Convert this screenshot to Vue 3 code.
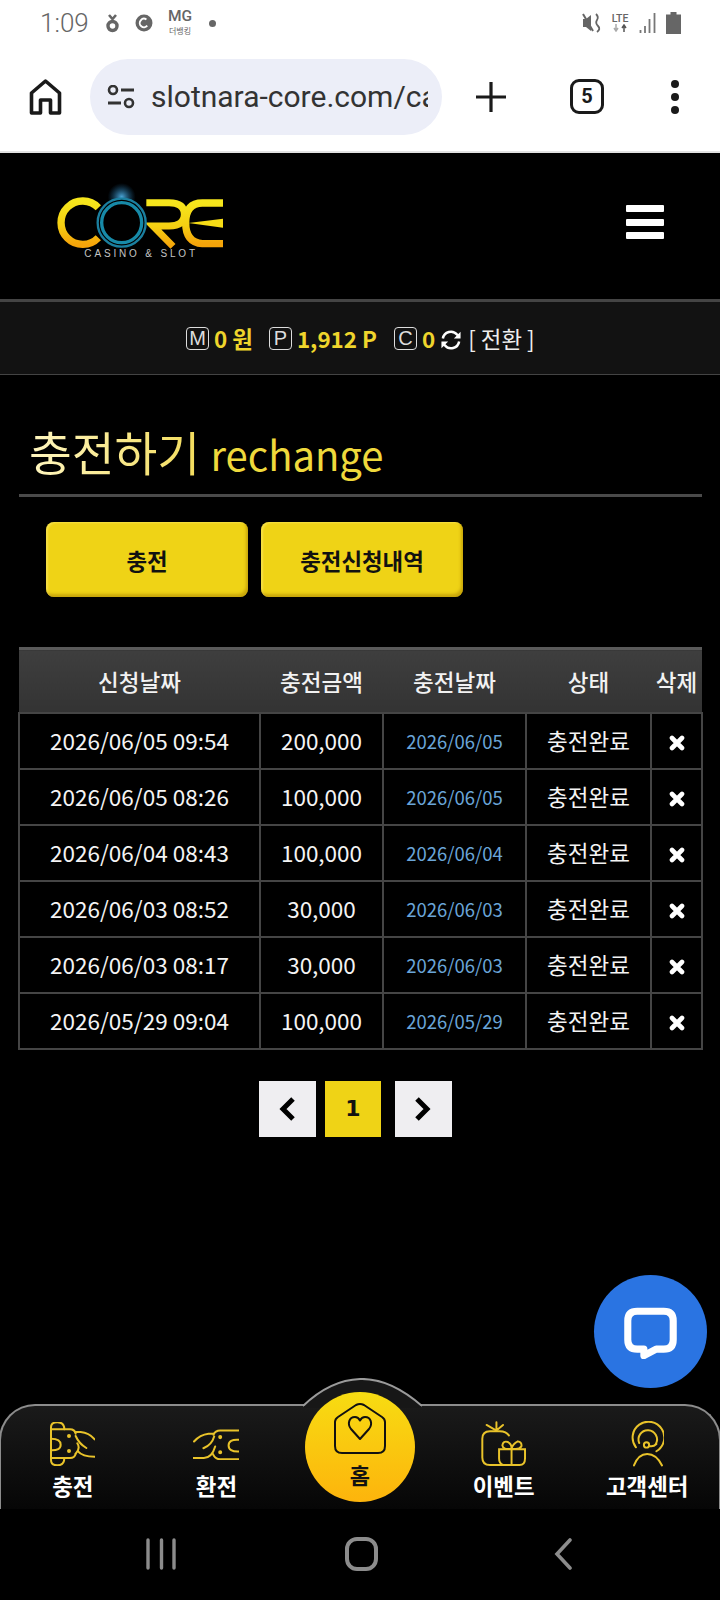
<script setup>
const rows = [
  { at: '2026/06/05 09:54', amount: '200,000', day: '2026/06/05' },
  { at: '2026/06/05 08:26', amount: '100,000', day: '2026/06/05' },
  { at: '2026/06/04 08:43', amount: '100,000', day: '2026/06/04' },
  { at: '2026/06/03 08:52', amount: '30,000', day: '2026/06/03' },
  { at: '2026/06/03 08:17', amount: '30,000', day: '2026/06/03' },
  { at: '2026/05/29 09:04', amount: '100,000', day: '2026/05/29' },
]
</script>

<template>
  <div class="screen">
    <div class="status">
      <span class="time">1:09</span>
      <svg class="s1" width="13" height="19" viewBox="0 0 13 19"><circle cx="6.500" cy="12" r="4.500" fill="none" stroke="#666" stroke-width="3.400"/><path d="M3 1l3.500 4L10 1" fill="none" stroke="#666" stroke-width="2.600"/></svg>
      <svg class="s2" width="18" height="18" viewBox="0 0 17 17"><circle cx="8.500" cy="8.500" r="8" fill="#666"/><circle cx="8.500" cy="8.500" r="4" fill="none" stroke="#fff" stroke-width="1.800" stroke-dasharray="18 7" transform="rotate(40 8.500 8.500)"/></svg>
      <div class="mg"><span class="mg-a">MG</span><span class="mg-b">더뱅킹</span></div>
      <i class="sdot"></i>
      <div class="sright">
        <svg width="19" height="24" viewBox="0 0 19 24"><path d="M1 8h3l5-4v16l-5-4H1z" fill="#666"/><path d="M1 3l10 17" stroke="#666" stroke-width="2"/><path d="M14 3q3 3 1 6t1 6-1 6" fill="none" stroke="#666" stroke-width="1.800"/></svg>
        <div class="lte"><span>LTE</span><svg width="18" height="8" viewBox="0 0 18 8"><path d="M5 0v6M3 4l2 3 2-3" fill="none" stroke="#aaa" stroke-width="1.500"/><path d="M13 8V2M11 4l2-3 2 3" fill="none" stroke="#555" stroke-width="1.500"/></svg></div>
        <svg width="18" height="22" viewBox="0 0 18 22"><path d="M1.500 21v-3M6 21v-7M10.500 21V7M15.500 21V1" stroke="#777" stroke-width="1.800"/></svg>
        <svg width="15" height="22" viewBox="0 0 15 22"><path d="M4.500 0h6v2.500H15V22H0V2.500h4.500z" fill="#666"/></svg>
      </div>
    </div>

    <div class="browser">
      <svg class="b-home" width="33" height="36" viewBox="0 0 33 36"><path d="M2.500 34V14L16.500 2l14 12v20h-9V21h-10v13z" fill="none" stroke="#1a1a1a" stroke-width="3.600" stroke-linejoin="round"/></svg>
      <div class="pill">
        <svg width="28" height="24" viewBox="0 0 28 24"><circle cx="6" cy="5" r="4" fill="none" stroke="#333" stroke-width="2.600"/><path d="M14 5h13M1 18h13" stroke="#333" stroke-width="2.800"/><circle cx="22" cy="18" r="4" fill="none" stroke="#333" stroke-width="2.600"/></svg>
        <span class="url">slotnara-core.com/casino</span>
      </div>
      <svg class="b-plus" width="32" height="32" viewBox="0 0 32 32"><path d="M16 1v30M1 16h30" stroke="#1a1a1a" stroke-width="3.200"/></svg>
      <div class="tabs">5</div>
      <div class="kebab"><i></i><i></i><i></i></div>
    </div>

    <header class="top">
      <svg class="logo" width="220" height="100" viewBox="0 0 660 300">
        <defs>
          <linearGradient id="gold" x1="0" y1="0" x2="0" y2="1">
            <stop offset="0" stop-color="#f6e61c"/><stop offset="0.55" stop-color="#f5d012"/><stop offset="1" stop-color="#f5a40a"/>
          </linearGradient>
          <radialGradient id="glow"><stop offset="0" stop-color="#59c4ff" stop-opacity=".85"/><stop offset="1" stop-color="#1b6fa8" stop-opacity="0"/></radialGradient>
        </defs>
        <circle cx="278" cy="78" r="42" fill="url(#glow)"/>
        <path d="M208 110A65 65 0 1 0 208 200" fill="none" stroke="url(#gold)" stroke-width="22"/>
        <path d="M352 95H420Q466 95 466 130T420 165H372L432 226" fill="none" stroke="url(#gold)" stroke-width="21"/>
        <path d="M582 96H520Q470 96 470 155T520 218H582" fill="none" stroke="url(#gold)" stroke-width="22"/>
        <path d="M478 156L582 143V170z" fill="#f6dc16"/>
        <circle cx="278" cy="155" r="72" fill="#000" stroke="#1b7f9f" stroke-width="7"/>
        <circle cx="278" cy="155" r="60" fill="#000" stroke="#178aa8" stroke-width="10"/>
        <text x="166" y="257" class="logo-sub">CASINO &amp; SLOT</text>
      </svg>
      <div class="burger"><i></i><i></i><i></i></div>
    </header>

    <div class="balance">
      <span class="tag">M</span><b class="val v1">0 원</b>
      <span class="tag t2">P</span><b class="val v2">1,912 P</b>
      <span class="tag t3">C</span><b class="val v3">0</b>
      <svg class="refresh" width="22" height="22" viewBox="0 0 23 23"><path d="M3 10a8.500 8.500 0 0 1 15-4l2 2M20 13a8.500 8.500 0 0 1-15 4l-2-2" fill="none" stroke="#fff" stroke-width="2.600"/><path d="M21.500 3v7h-7zM1.500 20v-7h7z" fill="#fff"/></svg>
      <span class="swap">[ 전환 ]</span>
    </div>

    <main class="page">
      <h2 class="title"><span class="ko">충전하기</span> <span class="en">rechange</span></h2>
      <div class="tabs-row">
        <button class="gold-btn">충전</button>
        <button class="gold-btn">충전신청내역</button>
      </div>

      <table class="list">
        <colgroup><col class="c1"><col class="c2"><col class="c3"><col class="c4"><col class="c5"></colgroup>
        <thead>
          <tr><th>신청날짜</th><th>충전금액</th><th>충전날짜</th><th>상태</th><th>삭제</th></tr>
        </thead>
        <tbody>
          <tr v-for="r in rows" :key="r.at">
            <td>{{ r.at }}</td>
            <td>{{ r.amount }}</td>
            <td class="blue">{{ r.day }}</td>
            <td>충전완료</td>
            <td class="del"><svg width="16" height="16" viewBox="0 0 16 16"><path d="M3 3l10 10M13 3L3 13" stroke="#fff" stroke-width="4.600" stroke-linecap="round"/></svg></td>
          </tr>
        </tbody>
      </table>

      <div class="pager">
        <button class="pg"><svg width="18" height="26" viewBox="0 0 18 26"><path d="M14 3L4 13l10 10" fill="none" stroke="#000" stroke-width="5"/></svg></button>
        <button class="pg on">1</button>
        <button class="pg last"><svg class="next" width="18" height="26" viewBox="0 0 18 26"><path d="M4 3l10 10L4 23" fill="none" stroke="#000" stroke-width="5"/></svg></button>
      </div>
    </main>

    <div class="chat">
      <svg width="53" height="52" viewBox="0 0 56 54"><path d="M14 4h28q10 0 10 10v20q0 10-10 10H34L21 51v-7h-7Q4 44 4 34V14Q4 4 14 4z" fill="none" stroke="#fff" stroke-width="7.500" stroke-linejoin="round"/></svg>
    </div>

    <nav class="nav">
      <svg class="bump" width="121" height="30" viewBox="0 0 121 30"><path d="M1 28Q28 2 58 1t62 27" fill="#171717" stroke="#9a9a9a" stroke-width="2"/><path d="M2 28h117v2H2z" fill="#171717"/></svg>
      <div class="item">
        <div class="ico">
          <svg width="45" height="44" viewBox="28 20 135 132" fill="none" stroke="#e9c32a" stroke-width="6" stroke-linecap="round">
            <path d="M31 128V42V36Q31 21 50 21Q71 21 71 42M31 128V134Q31 150 50 150Q71 150 71 128"/>
            <path d="M31 42H88Q102 42 105 55M31 128H88Q102 128 105 115"/>
            <path d="M31 70Q60 70 60 88T31 105"/>
            <path d="M103 50H120Q145 52 162 72M105 62Q115 85 137 98M105 115Q120 100 110 84M112 108Q125 124 162 124"/>
            <circle cx="85" cy="62" r="3" fill="#e9c32a"/><circle cx="85" cy="107" r="3" fill="#e9c32a"/>
          </svg>
        </div>
        <span class="lbl">충전</span>
      </div>
      <div class="item">
        <div class="ico">
          <svg width="46" height="31" viewBox="459 38 137 92" fill="none" stroke="#e9c32a" stroke-width="6" stroke-linecap="round">
            <path d="M595 42H540Q525 42 520 55M595 128H540Q525 128 518 112"/>
            <path d="M595 70Q565 68 565 87T595 105"/>
            <path d="M520 52H505Q480 55 462 75M522 60Q515 85 490 95M525 90Q515 125 490 124H460"/>
            <circle cx="540" cy="62" r="3" fill="#e9c32a"/><circle cx="540" cy="107" r="3" fill="#e9c32a"/>
          </svg>
        </div>
        <span class="lbl">환전</span>
      </div>
      <div class="item">
        <div class="home">
          <svg width="54" height="53" viewBox="0 0 54 53" fill="none" stroke="#111" stroke-width="2" stroke-linejoin="round">
            <path d="M2 20q0-3 3-5L23 3q4-2 8 0l18 12q3 2 3 5v24q0 7-7 7H9q-7 0-7-7z"/>
            <path d="M27 37L18 27C14 22 16 15 22 15C24.500 15 26 16.500 27 18.500C28 16.500 29.500 15 32 15C38 15 40 22 36 27Z"/>
          </svg>
          <span class="home-l">홈</span>
        </div>
      </div>
      <div class="item">
        <div class="ico">
          <svg width="46" height="46" viewBox="363 122 140 138" fill="none" stroke="#e9c32a" stroke-width="6" stroke-linecap="round">
            <path d="M448 165Q440 152 420 152H390Q367 152 367 175V232Q367 255 390 255H480Q497 255 497 235V207H418V235Q418 250 430 255"/>
            <path d="M456 207V255M456 205Q430 210 428 195Q430 180 445 185Q456 190 456 205Q460 190 475 183Q488 185 486 198Q480 210 456 205"/>
            <path d="M410 150V125M410 150L380 133M410 150L430 133"/>
          </svg>
        </div>
        <span class="lbl">이벤트</span>
      </div>
      <div class="item">
        <div class="ico">
          <svg width="33" height="46" viewBox="813 121 100 138" fill="none" stroke="#e9c32a" stroke-width="6" stroke-linecap="round">
            <path d="M828 200A48 48 0 1 1 890 212"/>
            <path d="M838 187A28 28 0 1 1 888 190"/>
            <circle cx="860" cy="193" r="8"/>
            <path d="M868 196Q880 200 890 190M822 255Q835 220 862 220Q890 220 907 255"/>
          </svg>
        </div>
        <span class="lbl">고객센터</span>
      </div>
    </nav>

    <div class="sys">
      <div class="sys-i"><svg width="32" height="32" viewBox="0 0 32 32"><path d="M3 2v28M16.500 2v28M29 2v28" stroke="#8c8c8c" stroke-width="3.400" stroke-linecap="round"/></svg></div>
      <div class="sys-i"><svg width="33" height="34" viewBox="0 0 33 34"><rect x="2" y="2" width="29" height="30" rx="10" fill="none" stroke="#8c8c8c" stroke-width="4"/></svg></div>
      <div class="sys-i"><svg width="18" height="32" viewBox="0 0 18 32"><path d="M16 2L3 16l13 14" fill="none" stroke="#8c8c8c" stroke-width="3.600" stroke-linecap="round"/></svg></div>
    </div>
  </div>
</template>

<style>
html, body { background: #000; margin: 0; }
</style>

<style scoped>
.screen {
  width: 720px;
  height: 1600px;
  position: relative;
  overflow: hidden;
  display: flex;
  flex-direction: column;
  background: #000;
  font-family: "Noto Sans CJK KR", "Noto Sans", sans-serif;
  color: #fff;
}

/* status bar */
.status {
  height: 44px;
  background: #fff;
  display: flex;
  align-items: center;
  padding: 2px 39px 0 40px;
  box-sizing: border-box;
  color: #666;
  font-family: Roboto, sans-serif;
}
.time { font-size: 26px; font-weight: 300; color: #666; width: 66px; }
.s1 { margin-right: 16px; }
.s2 { margin-right: 14px; }
.mg { display: flex; flex-direction: column; align-items: center; width: 26px; margin-right: 16px; line-height: 1; }
.mg-a { font-size: 15.500px; color: #666; font-weight: 500; margin-top: -2px; }
.mg-b { font-size: 8px; color: #666; margin-top: 3px; font-family: "Noto Sans CJK KR", sans-serif; white-space: nowrap; }
.sdot { width: 7px; height: 7px; border-radius: 50%; background: #666; }
.sright { margin-left: auto; display: flex; align-items: center; gap: 9px; }
.lte { display: flex; flex-direction: column; align-items: center; line-height: 1; width: 20px; }
.lte span { font-size: 10.500px; font-weight: 500; color: #666; }

/* browser bar */
.browser {
  height: 107px;
  background: #fff;
  display: flex;
  align-items: center;
  box-sizing: border-box;
  padding-left: 29px;
  padding-bottom: 2px;
}
.pill {
  width: 352px;
  height: 76px;
  margin-left: 28px;
  border-radius: 38px;
  background: #eceef8;
  display: flex;
  align-items: center;
  box-sizing: border-box;
  padding-left: 17px;
  overflow: hidden;
  flex: none;
}
.url {
  font-family: Roboto, sans-serif;
  font-size: 30px;
  color: #333;
  margin-left: 16px;
  width: 277px;
  overflow: hidden;
  white-space: nowrap;
}
.b-plus { margin-left: 33px; }
.tabs {
  width: 34px;
  height: 35px;
  margin-left: 63px;
  box-sizing: border-box;
  border: 3.500px solid #1a1a1a;
  border-radius: 9px;
  color: #1a1a1a;
  font: 700 20px/28px Roboto, sans-serif;
  text-align: center;
}
.kebab { margin-left: 67px; display: flex; flex-direction: column; gap: 5px; }
.kebab i { width: 8px; height: 8px; border-radius: 50%; background: #1a1a1a; display: block; }

/* site header */
.top {
  border-top: 2px solid #e2e2e2;
  height: 146px;
  background: #000;
  display: flex;
  align-items: flex-start;
  box-sizing: content-box;
  padding-left: 29px;
  padding-right: 56px;
  justify-content: space-between;
}
.logo { margin-top: 18px; }
.logo-sub { font-family: "Liberation Sans", sans-serif; font-size: 30px; letter-spacing: 8.500px; fill: #c4c4c4; }
.burger { margin-top: 52px; display: flex; flex-direction: column; gap: 6.500px; }
.burger i { display: block; width: 38px; height: 7px; background: #fff; border-radius: 1px; }

.balance {
  height: 72px;
  border-top: 3px solid #444;
  border-bottom: 1px solid #444;
  background: #121212;
  display: flex;
  align-items: center;
  padding-left: 186px;
  box-sizing: content-box;
}
.tag {
  width: 23px;
  height: 23px;
  box-sizing: border-box;
  border: 1px solid #ddd;
  border-radius: 4px;
  font: 300 20px/21px "Liberation Sans", sans-serif;
  color: #ddd;
  text-align: center;
}
.val { color: #efd52c; font-size: 22.400px; font-weight: 700; line-height: 24px; white-space: nowrap; }
.v1 { margin-left: 5px; }
.t2 { margin-left: 16px; }
.v2 { margin-left: 5px; }
.t3 { margin-left: 17px; }
.v3 { margin-left: 5px; }
.refresh { margin-left: 5px; margin-top: 4px; }
.swap { margin-left: 6px; font-size: 22.400px; color: #eee; white-space: nowrap; line-height: 28px; }

/* page */
.page { flex: 1; min-height: 0; padding-top: 46px; }
.title {
  margin: 0 18px 0 19px;
  height: 76px;
  box-sizing: border-box;
  border-bottom: 3px solid #4a4a4a;
  padding-left: 10px;
  font-weight: 400;
  white-space: nowrap;
  line-height: 60px;
}
.ko {
  font-size: 46.500px;
  background: linear-gradient(90deg, #fff6c0, #f3dc5c);
  -webkit-background-clip: text;
  background-clip: text;
  color: transparent;
  letter-spacing: 0;
}
.en { font-size: 40px; color: #efd93c; margin-left: 5px; }
.tabs-row { display: flex; gap: 13px; padding: 25px 0 0 46px; }
.gold-btn {
  width: 202px;
  height: 75px;
  border: none;
  border-radius: 8px;
  background: #efd316;
  box-shadow: inset -2px -3px 3px rgba(170, 130, 0, .55), inset 2px 1px 2px rgba(255, 240, 120, .5);
  color: #111;
  font-family: inherit;
  font-size: 22.400px;
  font-weight: 700;
  padding: 0;
}
.list {
  margin: 50px 0 0 18px;
  width: 683px;
  table-layout: fixed;
  border-collapse: collapse;
}
.c1 { width: 241px; } .c2 { width: 123px; } .c3 { width: 143px; } .c4 { width: 125px; } .c5 { width: 51px; }
th {
  box-sizing: border-box;
  height: 64px;
  padding: 0;
  background: linear-gradient(#3e3e3e, #333);
  border-top: 3px solid #5a5a5a;
  font-size: 22.500px;
  font-weight: 500;
  color: #f2f2f2;
}
td {
  box-sizing: border-box;
  height: 56px;
  padding: 0 0 2px;
  border: 2px solid #454545;
  text-align: center;
  font-size: 22.500px;
  font-weight: 400;
  color: #f4f4f4;
  line-height: 30px;
}
td.blue { color: #6aa5d8; font-size: 18.500px; padding: 1px 0 0; }
td.del { padding: 0; }
td.del svg { display: block; margin: 4px auto 0; }
.pager { display: flex; padding: 31px 0 0 259px; }
.pg {
  width: 57px;
  height: 56px;
  border: none;
  padding: 0;
  background: #efeef1;
  display: flex;
  align-items: center;
  justify-content: center;
  margin-right: 9px;
  font: 700 22px "DejaVu Sans", sans-serif;
  color: #111;
}
.pg.on { background: #efd316; width: 56px; margin-right: 14px; }
.pg.last { margin-right: 0; }
.next { margin-right: 3px; }

.chat {
  position: absolute;
  left: 594px;
  top: 1275px;
  width: 113px;
  height: 113px;
  border-radius: 50%;
  background: #2a74e2;
  display: flex;
  align-items: center;
  justify-content: center;
}
.chat svg { margin-top: 2px; }

/* bottom nav */
.nav {
  position: relative;
  height: 105px;
  box-sizing: border-box;
  border: 2px solid #8c8c8c;
  border-bottom: none;
  border-radius: 36px 36px 0 0;
  background: linear-gradient(#1a1a1a, #060606);
  display: grid;
  grid-template-columns: repeat(5, 1fr);
  margin: 0 -1px;
}
.bump { position: absolute; left: 301px; top: -28px; }
.item { display: flex; flex-direction: column; align-items: center; position: relative; }
.ico { height: 46px; margin-top: 15px; display: flex; align-items: center; justify-content: center; }
.lbl { font-size: 22.400px; font-weight: 700; line-height: 30px; margin-top: 3px; color: #fff; white-space: nowrap; }
.home {
  width: 110px;
  height: 110px;
  margin-top: -14px;
  border-radius: 50%;
  flex: none;
  background: linear-gradient(#f7dc12, #fdb40c);
  display: flex;
  flex-direction: column;
  align-items: center;
  padding-top: 10px;
  box-sizing: border-box;
}
.home-l { font-size: 22px; font-weight: 700; color: #111; line-height: 28px; margin-top: 5px; }

.sys {
  height: 91px;
  background: #000;
  display: grid;
  grid-template-columns: repeat(3, 1fr);
  padding: 0 56px 0 60px;
}
.sys-i { display: flex; align-items: center; justify-content: center; padding-bottom: 2px; }
</style>
